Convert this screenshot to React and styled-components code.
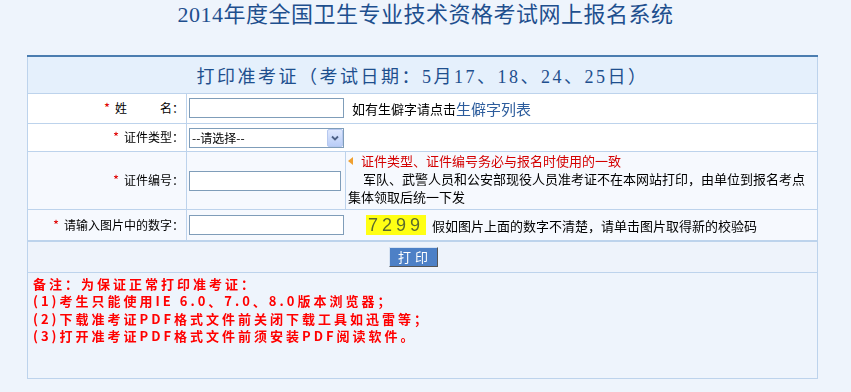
import React from "react";
import styled, { createGlobalStyle } from "styled-components";

const Global = createGlobalStyle`
  html, body {
    margin: 0;
    padding: 0;
    background: #eef4fc;
  }
  body {
    font-family: "Noto Sans CJK SC", sans-serif;
    font-size: 12px;
    color: #000;
  }
`;

const Page = styled.div`
  width: 851px;
  height: 392px;
  overflow: hidden;
`;

const Title = styled.h1`
  margin: 0;
  height: 30px;
  line-height: 30px;
  text-align: center;
  font-size: 22px;
  letter-spacing: 0.5px;
  font-weight: normal;
  color: #1e4f8e;
  font-family: "Liberation Serif", "Noto Sans CJK SC", serif;
`;

const Panel = styled.div`
  margin: 25px 0 0 27px;
  width: 790px;
`;

const Form = styled.table`
  width: 790px;
  border-collapse: collapse;
  table-layout: fixed;
  border-top: 2px solid #4b7db0;
  td {
    border: 1px solid #bdd3ec;
    padding: 0;
  }
`;

const Row = styled.tr`
  height: ${(p) => p.$h}px;
  td {
    background: ${(p) => (p.$shade ? "#f6f9fe" : "#fff")};
  }
`;

const Head = styled.td`
  && {
    background: #e5f0fc;
  }
  text-align: center;
  font-size: 18px;
  letter-spacing: 2.5px;
  color: #1e4f8e;
  font-family: "Liberation Serif", "Noto Sans CJK SC", serif;
`;

const Label = styled.td`
  text-align: right;
  font-size: 12px;
  line-height: 16px;
  && {
    padding-right: 2px;
  }
`;

const Star = styled.span`
  color: #e00000;
  font-size: 13px;
  margin-right: 5px;
`;

const Gap = styled.span`
  display: inline-block;
  width: ${(p) => p.$w}px;
`;

const Field = styled.td`
  && {
    padding-left: 2px;
  }
  font-size: 13px;
  white-space: nowrap;
`;

const Input = styled.input`
  box-sizing: border-box;
  width: ${(p) => p.$w || 155}px;
  height: 20px;
  border: 1px solid #7f9db9;
  padding: 0 2px;
  font-size: 12px;
  vertical-align: middle;
  background: #fff;
  outline: none;
`;

const Hint = styled.span`
  margin-left: ${(p) => p.$ml || 8}px;
  vertical-align: middle;
  font-size: 13px;
`;

const Link = styled.a`
  color: #2c5c9c;
  font-size: 15px;
  text-decoration: none;
  vertical-align: middle;
`;

const SelectWrap = styled.span`
  position: relative;
  display: inline-block;
  vertical-align: middle;
`;

const Select = styled.select`
  appearance: none;
  box-sizing: border-box;
  width: 155px;
  height: 20px;
  border: 1px solid #7f9db9;
  border-radius: 0;
  background: #fff;
  font-family: "Noto Sans CJK SC", sans-serif;
  font-size: 12px;
  padding: 0 2px;
  color: #000;
  outline: none;
`;

const DropBtn = styled.span`
  position: absolute;
  right: 1px;
  top: 1px;
  width: 16px;
  height: 18px;
  box-sizing: border-box;
  border: 1px solid #b6c8ef;
  border-radius: 2px;
  background: linear-gradient(#dfe8fd, #b9cdf7);
  display: flex;
  align-items: center;
  justify-content: center;
  pointer-events: none;
`;

const Note = styled.td`
  vertical-align: top;
  && {
    padding-left: 2px;
  }
  font-size: 13px;
  line-height: 18px;
`;

const Warn = styled.div`
  color: #d40000;
  display: flex;
  align-items: center;
`;

const Arrow = styled.span`
  width: 0;
  height: 0;
  border-top: 4px solid transparent;
  border-bottom: 4px solid transparent;
  border-right: 5px solid #f0a030;
  margin-right: 8px;
`;

const Indent = styled.div`
  text-indent: 15px;
`;

const Captcha = styled.span`
  display: inline-block;
  width: 60px;
  height: 20px;
  margin-left: 22px;
  background: #ffff14;
  color: #5a6b2e;
  font-family: "Liberation Sans", sans-serif;
  font-size: 18px;
  line-height: 20px;
  letter-spacing: 4px;
  text-align: center;
  vertical-align: middle;
  cursor: pointer;
`;

const ButtonCell = styled.td`
  && {
    background: #eef3fb;
    border-top: 2px solid #bdd3ec;
    padding-right: 19px;
  }
  text-align: center;
`;

const PrintButton = styled.button`
  width: 49px;
  height: 20px;
  padding: 0;
  background: #4d80c6;
  color: #fff;
  font-family: "Noto Sans CJK SC", sans-serif;
  font-size: 13px;
  line-height: 16px;
  letter-spacing: 4px;
  text-indent: 4px;
  border: 1px solid;
  border-color: #d6e2f2 #555 #555 #d6e2f2;
  cursor: pointer;
`;

const Remark = styled.td`
  && {
    background: #eef4fc;
    padding: 2px 0 0 5px;
  }
  vertical-align: top;
  color: #ff0000;
  font-weight: bold;
  font-size: 13px;
  line-height: 17.5px;
  letter-spacing: 3px;
`;

export default function App() {
  return (
    <Page>
      <Global />
      <Title>2014年度全国卫生专业技术资格考试网上报名系统</Title>
      <Panel>
        <Form>
          <colgroup>
            <col style={{ width: 159 }} />
            <col style={{ width: 159 }} />
            <col style={{ width: 472 }} />
          </colgroup>
          <tbody>
            <tr style={{ height: 37 }}>
              <Head colSpan={3}>打印准考证（考试日期：5月17、18、24、25日）</Head>
            </tr>
            <Row $h={30}>
              <Label>
                <Star>*</Star>姓<Gap $w={33} />名：
              </Label>
              <Field colSpan={2}>
                <Input autoFocus />
                <Hint>如有生僻字请点击</Hint>
                <Link href="#">生僻字列表</Link>
              </Field>
            </Row>
            <Row $h={28}>
              <Label>
                <Star>*</Star>证件类型：
              </Label>
              <Field colSpan={2}>
                <SelectWrap>
                  <Select defaultValue="">
                    <option value="">--请选择--</option>
                    <option value="1">身份证</option>
                    <option value="2">军官证</option>
                  </Select>
                  <DropBtn>
                    <svg width="8" height="6" viewBox="0 0 8 6">
                      <path d="M1 1.5 L4 4.5 L7 1.5" fill="none" stroke="#4d6185" strokeWidth="1.8" />
                    </svg>
                  </DropBtn>
                </SelectWrap>
              </Field>
            </Row>
            <Row $h={58} $shade>
              <Label>
                <Star>*</Star>证件编号：
              </Label>
              <Field>
                <Input $w={152} />
              </Field>
              <Note>
                <Warn>
                  <Arrow />
                  证件类型、证件编号务必与报名时使用的一致
                </Warn>
                <Indent>军队、武警人员和公安部现役人员准考证不在本网站打印，由单位到报名考点</Indent>
                <div>集体领取后统一下发</div>
              </Note>
            </Row>
            <Row $h={32} $shade>
              <Label>
                <Star>*</Star>请输入图片中的数字：
              </Label>
              <Field colSpan={2}>
                <Input />
                <Captcha>7299</Captcha>
                <Hint $ml={6}>假如图片上面的数字不清楚，请单击图片取得新的校验码</Hint>
              </Field>
            </Row>
            <tr style={{ height: 31 }}>
              <ButtonCell colSpan={3}>
                <PrintButton>打印</PrintButton>
              </ButtonCell>
            </tr>
            <tr style={{ height: 106 }}>
              <Remark colSpan={3}>
                <div>备注：为保证正常打印准考证：</div>
                <div>(1)考生只能使用IE 6.0、7.0、8.0版本浏览器；</div>
                <div>(2)下载准考证PDF格式文件前关闭下载工具如迅雷等；</div>
                <div>(3)打开准考证PDF格式文件前须安装PDF阅读软件。</div>
              </Remark>
            </tr>
          </tbody>
        </Form>
      </Panel>
    </Page>
  );
}
